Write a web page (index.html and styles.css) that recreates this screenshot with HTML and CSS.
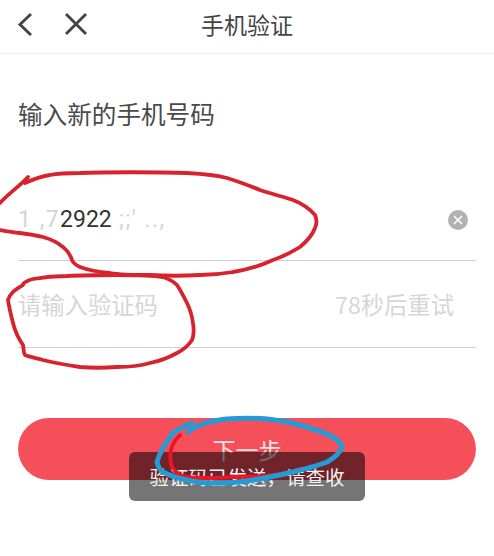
FILE: index.html
```html
<!DOCTYPE html>
<html lang="zh-CN">
<head>
<meta charset="utf-8">
<title>手机验证</title>
<link rel="stylesheet" href="styles.css">
</head>
<body>
<div class="page">
  <header class="topbar">
    <div class="topbar-icons">
      <svg class="icon-back" viewBox="0 0 16 24" width="16" height="24"><path d="M14 2 L3 12.5 L14 23" fill="none" stroke="#444" stroke-width="2.9"/></svg>
      <svg class="icon-close" viewBox="0 0 24 24" width="24" height="24"><path d="M2 2 L22 22 M22 2 L2 22" fill="none" stroke="#444" stroke-width="2.9"/></svg>
    </div>
    <h1 class="title">手机验证</h1>
  </header>
  <main class="content">
    <h2 class="heading">输入新的手机号码</h2>
    <div class="field field-phone">
      <span class="phone"><span class="smudge">1 ,7</span>2922<span class="smudge"> ;;' ..,</span></span>
      <svg class="icon-clear" viewBox="0 0 20 20" width="20" height="20"><circle cx="10" cy="10" r="10" fill="#b2b2b2"/><path d="M6 6 L14 14 M14 6 L6 14" stroke="#fff" stroke-width="1.6"/></svg>
    </div>
    <div class="field field-code">
      <span class="placeholder">请输入验证码</span>
      <span class="retry">78秒后重试</span>
    </div>
    <button class="next" type="button">下一步</button>
  </main>
  <div class="toast">验证码已发送，请查收</div>
  <svg class="scribble" viewBox="0 0 494 556" width="494" height="556">
    <g fill="none" stroke-linecap="round" stroke-linejoin="round">
      <path class="red" d="M28 177 C20 186 10 192 0 203 M25 183 C34 179 42 176 50 175 C60 173 70 173 80 173 C100 172 160 172 187 173 C205 174 216 175 227 178 C240 182 250 186 260 190 C272 194 284 197 293 200 C303 204 310 209 315 215 C317 220 317 224 315 228 C312 236 306 242 300 247 C292 252 282 257 273 260 C260 266 246 270 233 272 C222 274 212 275 200 275 C183 276 166 276 150 275 C136 275 122 275 110 273 C98 272 88 270 80 267 C76 265 73 263 72 260 C70 254 67 250 63 247 C57 242 50 239 43 237 C35 235 28 234 20 233 C12 232 6 231 0 230"/>
      <path class="red" d="M23 284 C26 281 29 280 33 279 C44 277 55 276 67 276 C84 275 100 275 117 275 C132 275 150 275 163 277 C169 279 173 281 177 285 C181 291 184 297 187 303 C190 309 192 316 193 323 C194 329 194 335 192 340 C188 346 183 350 177 353 C168 358 160 361 150 363 C140 366 128 367 117 367 C104 368 92 368 80 367 C67 365 55 363 43 360 C36 358 30 357 25 355 C23 352 24 349 23 345 C18 338 15 331 13 323 C11 315 9 307 8 300 C9 296 11 294 13 292 C16 289 20 287 23 285"/>
      <path class="red thin" d="M180 435 C175 440 172 444 171 450 C170 456 170 462 172 467 C176 473 181 476 187 477 C203 479 218 478 233 477 C247 477 260 477 273 475 C282 474 292 472 300 469"/>
      <path class="blue" d="M192 423 C185 426 178 429 173 433 C169 438 166 443 163 448 C160 453 158 458 157 462 C158 467 160 470 163 472 C170 476 178 478 187 480 C195 482 204 483 213 483 C226 484 240 482 253 480 C267 478 280 475 293 472 C305 469 317 466 327 462 C334 458 340 453 342 447 C341 443 338 440 333 437 C323 432 311 428 300 425 C289 422 278 420 267 419 C254 418 240 418 227 419 C217 420 208 422 200 425 C196 427 191 429 188 432"/>
    </g>
  </svg>
</div>
</body>
</html>
```

FILE: styles.css
```css
* {
  box-sizing: border-box;
}

html,
body {
  margin: 0;
  padding: 0;
  background: #fff;
}

.page {
  position: relative;
  width: 494px;
  height: 556px;
  overflow: hidden;
  font-family: "Noto Sans CJK SC", "Noto Sans", sans-serif;
}

.topbar {
  position: relative;
  height: 54px;
  padding-bottom: 5px;
  border-bottom: 1px solid #f2f2f2;
  display: flex;
  align-items: center;
  justify-content: center;
}

.topbar-icons {
  position: absolute;
  left: 17px;
  top: 12px;
  display: flex;
  align-items: center;
  gap: 31px;
}

.icon-close {
  display: block;
}

.icon-back {
  display: block;
}

.title {
  margin: 0;
  font-size: 23px;
  line-height: 40px;
  font-weight: 400;
  color: #444;
}

.content {
  padding: 42px 18px 0;
}

.heading {
  margin: 0;
  font-size: 24.6px;
  line-height: 34px;
  font-weight: 400;
  color: #4a4a4a;
}

.field {
  display: flex;
  align-items: center;
  justify-content: space-between;
  border-bottom: 1px solid #cfcfcf;
}

.field-phone {
  height: 87px;
  margin-top: 44px;
  padding: 24px 8px 18px 0;
}

.field-code {
  height: 87px;
  padding: 0 22px 1px 0;
}

.phone {
  font-family: "Roboto", sans-serif;
  font-size: 23px;
  line-height: 30px;
  color: #333;
  white-space: pre;
}

.smudge {
  color: #d4d4d4;
  letter-spacing: 1.5px;
}

.placeholder {
  font-size: 23.3px;
  line-height: 32px;
  color: #d6d6d6;
}

.retry {
  font-size: 23.3px;
  line-height: 32px;
  color: #d6d6d6;
}

.next {
  display: block;
  width: 100%;
  height: 62px;
  margin-top: 70px;
  padding: 0;
  border: 0;
  border-radius: 31px;
  background: #f5505a;
  color: #fbe3e4;
  font-family: inherit;
  font-size: 23px;
  line-height: 62px;
}

.toast {
  position: absolute;
  left: 129px;
  top: 452px;
  width: 236px;
  height: 49px;
  border-radius: 6px;
  background: rgba(0, 0, 0, 0.54);
  color: #f4f4f4;
  font-size: 19.5px;
  line-height: 49px;
  text-align: center;
}

.scribble {
  position: absolute;
  left: 0;
  top: 0;
  pointer-events: none;
}

.red {
  stroke: #d8232f;
  stroke-width: 3.8;
}

.red.thin {
  stroke: #ee1522;
}

.blue {
  stroke: #229bd6;
  stroke-width: 5;
}
```
